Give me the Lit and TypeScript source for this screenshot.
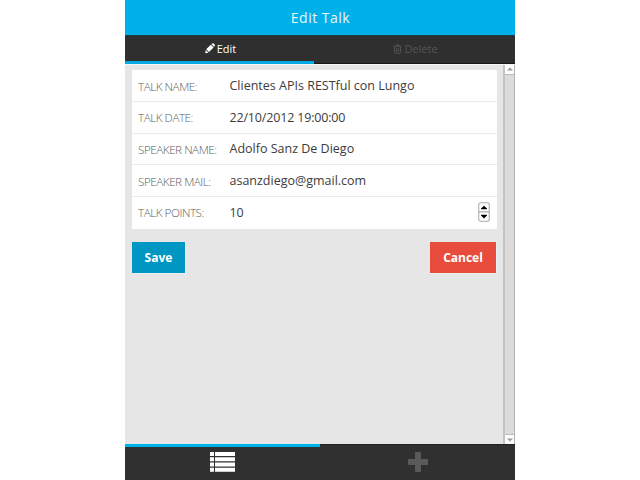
import { LitElement, html, svg, css } from "lit";
import { customElement, property } from "lit/decorators.js";

const icons: Record<string, unknown> = {
  pencil: svg`<svg width="10" height="11" viewBox="0 0 10 11"><path fill="#fff" d="M0.2 10.3 0.8 6.9 3.5 9.7ZM1.2 6.3 5.8 1.8 8.6 4.6 4 9.1ZM6.4 1.2 7.3.5Q8 -.1 8.7.5L9.8 1.7Q10.2 2.3 9.8 2.9L9.1 3.8Z"/></svg>`,
  trash: svg`<svg width="9" height="10" viewBox="0 0 9 11"><path fill="none" stroke="#555" stroke-width="1.1" d="M0 2.5H9M2.8 2.2 3.3.8H5.7L6.2 2.2M1.3 3V9.2Q1.3 10.2 2.1 10.2H6.9Q7.7 10.2 7.7 9.2V3M3.5 4.3V8.6M5.5 4.3V8.6"/></svg>`,
  list: svg`<svg width="25" height="20" viewBox="0 0 25 20"><path fill="#fff" d="M0 0H4V4H0ZM5 0H25V4H5ZM0 5.3H4V9.3H0ZM5 5.3H25V9.3H5ZM0 10.5H4V14.5H0ZM5 10.5H25V14.5H5ZM0 15.8H4V19.8H0ZM5 15.8H25V19.8H5Z"/></svg>`,
  plus: svg`<svg width="20" height="20" viewBox="0 0 20 20"><path fill="#5a5a5a" d="M8 0H12Q13 0 13 1V7H19Q20 7 20 8V12Q20 13 19 13H13V19Q13 20 12 20H8Q7 20 7 19V13H1Q0 13 0 12V8Q0 7 1 7H7V1Q7 0 8 0Z"/></svg>`,
};

@customElement("form-row")
class FormRow extends LitElement {
  @property() label = "";
  @property() value = "";
  @property({ type: Boolean }) stepper = false;
  static styles = css`
    :host { display: flex; align-items: center; box-sizing: border-box; height: 31.7px; padding: 0 7px 0 6px; border-bottom: 1px solid #ebebeb; background: #fff; }
    :host(:first-child) { height: 32.4px; padding-top: 1px; }
    :host(:last-child) { border-bottom-color: #fff; }
    .label { width: 91.5px; flex: none; font-size: 11.7px; font-weight: 300; letter-spacing: -0.47px; color: #606060; white-space: nowrap; }
    .value { flex: 1; font-size: 12.5px; color: #3c3c3c; white-space: nowrap; }
    .value.numeric { letter-spacing: -0.17px; }
    .stepper { display: block; }
  `;
  render() {
    const numeric = /^[\d/: ]+$/.test(this.value);
    return html`<span class="label">${this.label}</span><span class="value ${numeric ? "numeric" : ""}">${this.value}</span>
      ${this.stepper
        ? html`<svg class="stepper" width="12" height="20" viewBox="0 0 12 20"><rect x=".7" y=".7" width="10.6" height="18.6" rx="2.3" fill="#fff" stroke="#bbb" stroke-width="1.3"/><path stroke="#999" d="M1 9.9H11"/><path d="M3 7.3V6.5L6 3.7 9 6.5V7.3ZM3 12.8V13.6L6 16.4 9 13.6V12.8Z"/></svg>`
        : ""}`;
  }
}

@customElement("app-root")
class AppRoot extends LitElement {
  static styles = css`
    :host { display: flex; justify-content: center; height: 480px; background: #fff; font-family: "Open Sans", sans-serif; }
    .app { width: 390px; display: flex; flex-direction: column; background: #303030; }
    header { height: 35px; line-height: 35px; background: #00b0e8; color: #e8f7fc; text-align: center; font-size: 14px; letter-spacing: 0.5px; text-indent: 1px; }
    nav { display: flex; box-sizing: border-box; height: 28.5px; border-top: 1px solid #1b3b47; background: #2f2f2f; }
    .tab { box-sizing: border-box; display: flex; flex: 1; align-items: center; justify-content: center; gap: 2px; font-size: 11px; color: #555; border-bottom: 1.5px solid #181818; padding-bottom: 1px; padding-left: 2px; }
    .tab.on { flex: none; width: 189px; color: #fff; border-bottom: 3px solid #00a9e0; padding: 1px 0 0 2px; }
    .body { flex: 1; display: flex; min-height: 0; border-top: 1.5px solid #f5f5f5; background: #e6e6e6; }
    .content { flex: 1; padding: 5px 6px 0 7px; }
    .actions { display: flex; justify-content: space-between; margin-top: 13.6px; }
    .btn { box-sizing: border-box; height: 32px; line-height: 31px; border: 1px solid #e8f0f2; border-width: 0 1px 1px 0; text-align: center; color: #fff; font-size: 12px; font-weight: 700; }
    .save { width: 54px; background: #0096c4; }
    .cancel { width: 67px; background: #e84c3d; }
    .bar { box-sizing: border-box; width: 12px; display: flex; flex-direction: column; justify-content: space-between; background: #dcdbd9; border-left: 2px solid #c3c3c3; border-right: 1px solid #b5b3b0; }
    .arrow { height: 9px; display: flex; align-items: center; justify-content: center; background: #fdfdfd; border: 1px solid #bbb; border-width: 0 0 1px; }
    .arrow.down { border-width: 1px 0 0; }
    footer { height: 36px; display: flex; background: #303030; }
    .item { box-sizing: border-box; flex: 1; display: flex; justify-content: center; align-items: flex-start; border-top: 1px solid #202020; padding-top: 7px; }
    .item.on { border-top: 3px solid #00b4ea; padding-top: 5px; }
  `;
  render() {
    const rows = [
      ["TALK NAME:", "Clientes APIs RESTful con Lungo"],
      ["TALK DATE:", "22/10/2012 19:00:00"],
      ["SPEAKER NAME:", "Adolfo Sanz De Diego"],
      ["SPEAKER MAIL:", "asanzdiego@gmail.com"],
      ["TALK POINTS:", "10"],
    ];
    return html`<div class="app">
      <header>Edit Talk</header>
      <nav><div class="tab on">${icons.pencil}<span>Edit</span></div><div class="tab">${icons.trash}<span>Delete</span></div></nav>
      <div class="body">
        <div class="content">
          <div>${rows.map(([l, v], i) => html`<form-row .label=${l} .value=${v} .stepper=${i === 4}></form-row>`)}</div>
          <div class="actions"><div class="btn save">Save</div><div class="btn cancel">Cancel</div></div>
        </div>
        <div class="bar">
          <div class="arrow"><svg width="6" height="4"><path fill="#999" d="M0 3.5 3 .5 6 3.5Z"/></svg></div>
          <div class="arrow down"><svg width="6" height="4"><path fill="#999" d="M0 .5 3 3.5 6 .5Z"/></svg></div>
        </div>
      </div>
      <footer><div class="item on">${icons.list}</div><div class="item">${icons.plus}</div></footer>
    </div>`;
  }
}
